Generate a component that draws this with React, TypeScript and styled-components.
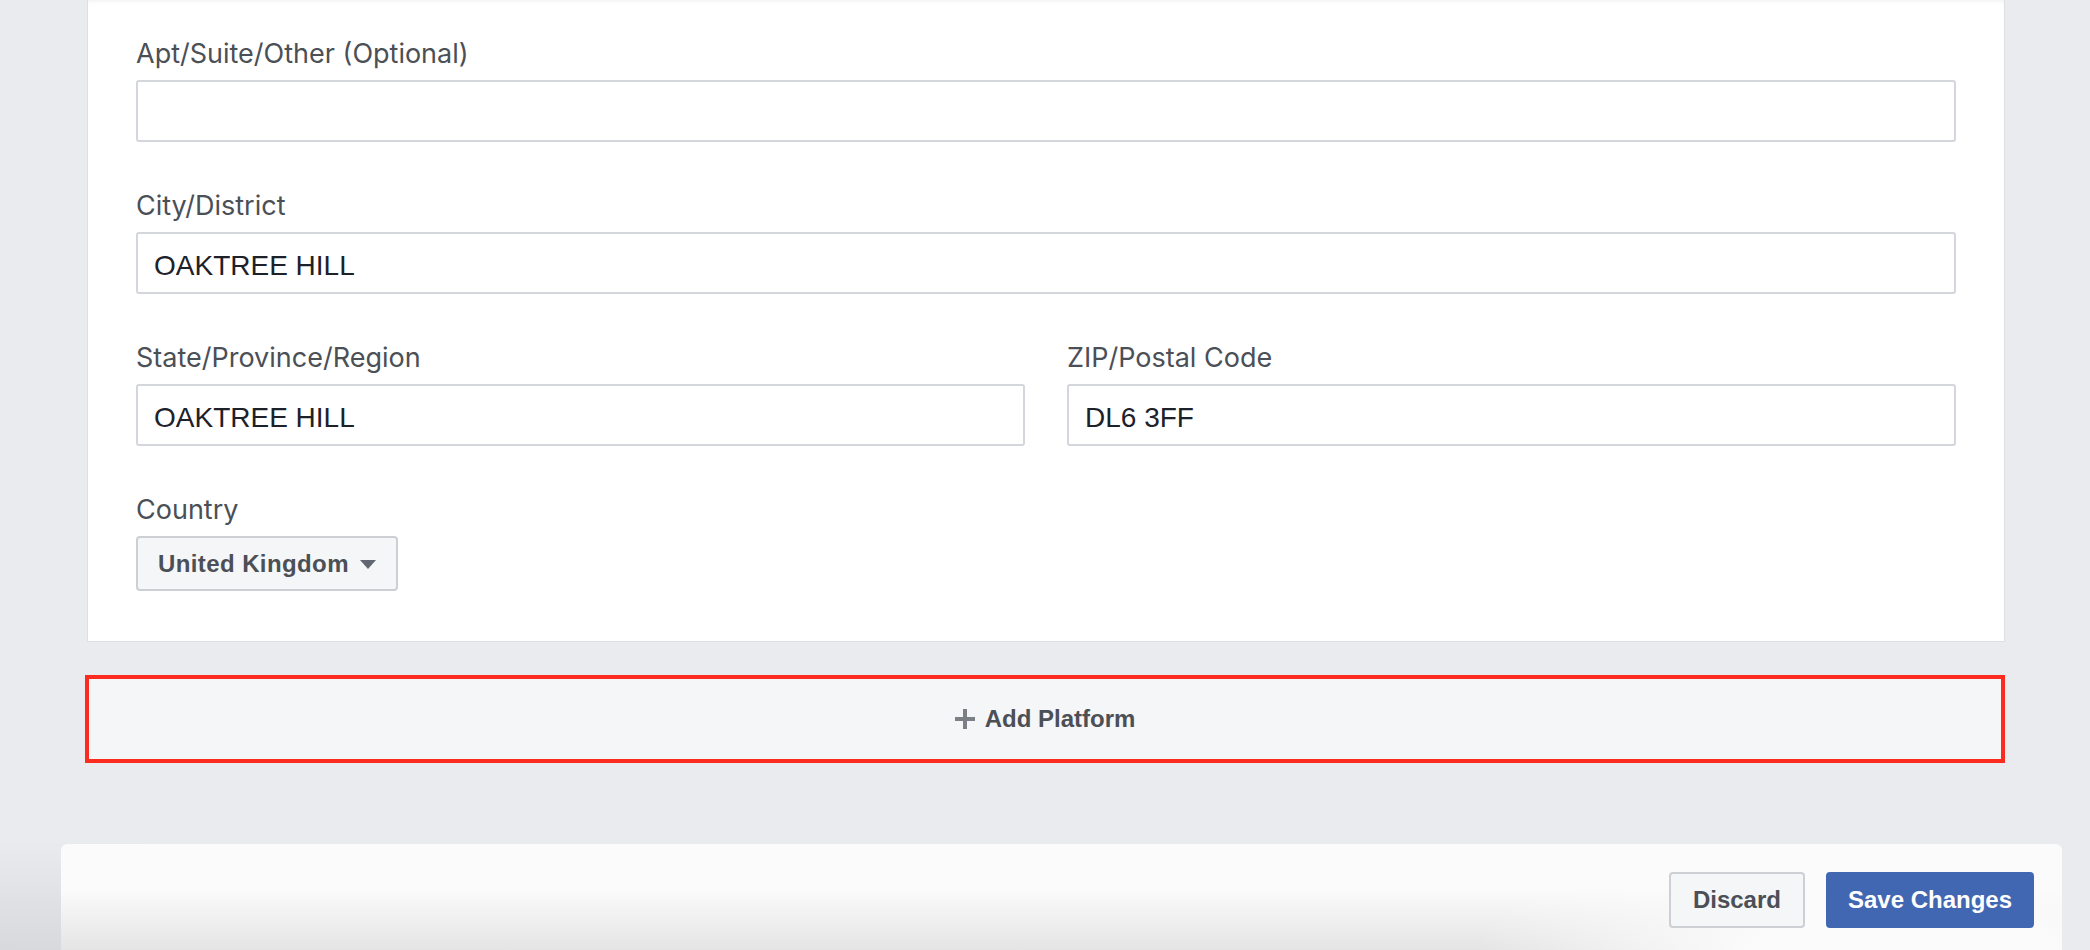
import React from 'react';
import styled, { createGlobalStyle } from 'styled-components';

const GlobalStyle = createGlobalStyle`
  html, body {
    margin: 0;
    padding: 0;
    background: #e9ebee;
  }
  body {
    font-family: Inter, "Liberation Sans", sans-serif;
    overflow: hidden;
  }
  * {
    box-sizing: border-box;
  }
`;

const Page = styled.div`
  height: 950px;
  overflow: hidden;
  background:
    radial-gradient(ellipse 1500px 110px at 0 100%, rgba(0, 0, 0, 0.08), rgba(0, 0, 0, 0)),
    #e9ebee;
`;

const Column = styled.div`
  width: 1918px;
  margin-left: 87px;
  display: flex;
  flex-direction: column;
  gap: 33px;
`;

const Card = styled.section`
  background: #fff;
  border: 1px solid #dddfe2;
  border-top: none;
  padding: 36px 48px 50px;
  display: flex;
  flex-direction: column;
  gap: 46px;
  box-shadow: inset 0 4px 4px -3px rgba(0, 0, 0, 0.07);
`;

const Field = styled.div`
  display: flex;
  flex-direction: column;
  min-width: 0;
`;

const Label = styled.label`
  display: block;
  font-family: Inter, "Liberation Sans", sans-serif;
  font-size: 27px;
  line-height: 32px;
  padding-top: 2px;
  margin-bottom: 10px;
  color: #4b4f56;
`;

const TextInput = styled.input`
  display: block;
  width: 100%;
  height: 62px;
  border: 2px solid #d3d6db;
  border-radius: 3px;
  padding: 5px 16px 0;
  font-family: "Liberation Sans", Arial, sans-serif;
  font-size: 28px;
  color: #1d2129;
  background: #fff;
  outline: none;
`;

const Row = styled.div`
  display: grid;
  grid-template-columns: 1fr 1fr;
  gap: 42px;
`;

const SelectButton = styled.button`
  align-self: flex-start;
  display: inline-flex;
  align-items: center;
  gap: 11px;
  height: 55px;
  padding: 0 20px;
  border: 2px solid #ccd0d5;
  border-radius: 4px;
  background: #f5f6f7;
  font-family: "Liberation Sans", Arial, sans-serif;
  font-weight: 700;
  font-size: 24px;
  letter-spacing: 0.4px;
  color: #4b4f56;
  cursor: pointer;
`;

const Caret = styled.span`
  width: 0;
  height: 0;
  border-left: 8.5px solid transparent;
  border-right: 8.5px solid transparent;
  border-top: 9px solid #606770;
  margin-top: 2px;
`;

const AddButton = styled.button`
  margin-left: -2px;
  width: calc(100% + 2px);
  height: 88px;
  border: 4px solid #fb2c1f;
  background: #f5f6f7;
  display: flex;
  align-items: center;
  justify-content: center;
  gap: 10px;
  font-family: "Liberation Sans", Arial, sans-serif;
  font-weight: 700;
  font-size: 24px;
  color: #4b4f56;
  cursor: pointer;
`;

const Footer = styled.footer`
  margin: 81px 0 0 61px;
  width: 2001px;
  padding: 28px;
  display: flex;
  justify-content: flex-end;
  gap: 21px;
  border-radius: 6px 6px 0 0;
  background:
    radial-gradient(ellipse 430px 130px at 92% 100%, rgba(251, 251, 251, 1) 35%, rgba(251, 251, 251, 0) 100%),
    linear-gradient(to bottom, #fbfbfb 0, #fbfbfb 45px, #e2e2e2 112px);
`;

const ActionButton = styled.button<{ $primary?: boolean }>`
  height: 56px;
  padding: 0 ${p => (p.$primary ? 20 : 22)}px;
  border-radius: 4px;
  border: 2px solid ${p => (p.$primary ? '#4267b2' : '#ccd0d5')};
  background: ${p => (p.$primary ? '#4267b2' : '#f5f6f7')};
  color: ${p => (p.$primary ? '#fff' : '#4b4f56')};
  font-family: "Liberation Sans", Arial, sans-serif;
  font-weight: 700;
  font-size: 24px;
  cursor: pointer;
`;

const PlusIcon = () => (
  <svg width="20" height="20" viewBox="0 0 20 20">
    <rect x="8" y="0" width="4" height="20" fill="#7b7f86" />
    <rect x="0" y="8" width="20" height="4" fill="#7b7f86" />
  </svg>
);

interface InputFieldProps {
  label: string;
  value?: string;
}

const InputField: React.FC<InputFieldProps> = ({ label, value = '' }) => (
  <Field>
    <Label>{label}</Label>
    <TextInput defaultValue={value} />
  </Field>
);

export default function App() {
  return (
    <Page>
      <GlobalStyle />
      <Column>
        <Card>
          <InputField label="Apt/Suite/Other (Optional)" />
          <InputField label="City/District" value="OAKTREE HILL" />
          <Row>
            <InputField label="State/Province/Region" value="OAKTREE HILL" />
            <InputField label="ZIP/Postal Code" value="DL6 3FF" />
          </Row>
          <Field>
            <Label>Country</Label>
            <SelectButton>
              United Kingdom
              <Caret />
            </SelectButton>
          </Field>
        </Card>
        <AddButton>
          <PlusIcon />
          Add Platform
        </AddButton>
      </Column>
      <Footer>
        <ActionButton>Discard</ActionButton>
        <ActionButton $primary>Save Changes</ActionButton>
      </Footer>
    </Page>
  );
}
